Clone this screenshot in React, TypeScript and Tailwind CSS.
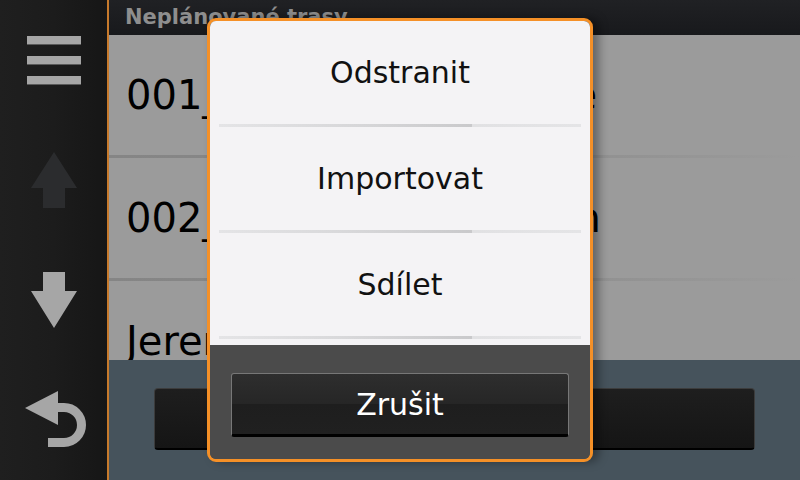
const font = { fontFamily: '"DejaVu Sans", "Noto Sans", sans-serif' };

function Hamburger() {
  return (
    <div className="flex flex-col gap-[11px]">
      {[0, 1, 2].map((i) => (
        <div key={i} className="w-[54px] h-[9px] bg-[#a6a6a6] border-b border-[#5a5a5a]" />
      ))}
    </div>
  );
}

function Arrow({ dir, color }: { dir: 'up' | 'down'; color: string }) {
  return (
    <svg width="46" height="56" viewBox="0 0 46 56">
      {dir === 'up' ? (
        <path d="M23 0 L46 36 H34 V56 H12 V36 H0 Z" fill={color} />
      ) : (
        <path d="M12 0 H34 V19 H46 L23 56 L0 19 H12 Z" fill={color} />
      )}
    </svg>
  );
}

function BackIcon() {
  return (
    <svg width="64" height="60" viewBox="0 0 64 60" className="ml-[5px]">
      <path d="M1 18 L34 1 V35 Z" fill="#a6a6a6" />
      <path d="M30 17.5 H40 A17.5 17.5 0 0 1 40 52.5 H24" fill="none" stroke="#a6a6a6" strokeWidth="9" />
    </svg>
  );
}

function Row({ text }: { text: string }) {
  return (
    <>
      <div className="h-[120px] shrink-0 flex items-center pl-[17px] text-[40px] text-black whitespace-nowrap overflow-hidden">
        {text}
      </div>
      <div className="h-[3px] shrink-0 bg-gradient-to-r from-[#858585] via-[#8a8a8a] to-[#9b9b9b]" />
    </>
  );
}

function MenuItem({ label }: { label: string }) {
  return (
    <>
      <div className="h-[103px] flex items-center justify-center text-[30px] text-[#111]">{label}</div>
      <div className="h-[3px] mx-[9px] bg-[linear-gradient(to_right,#e4e4e6_0%,#d8d8da_35%,#c9c9cb_70%,#e1e1e3_70%,#e4e4e6_100%)]" />
    </>
  );
}

export default function App() {
  return (
    <div className="relative w-[800px] h-[480px] flex overflow-hidden bg-[#9b9b9b]" style={font}>
      <div className="w-[109px] shrink-0 flex flex-col border-r-2 border-[#c77a2c] bg-gradient-to-r from-[#1f1f1f] via-[#1c1c1c] to-[#161616]">
        <div className="h-[120px] flex items-center justify-center">
          <Hamburger />
        </div>
        <div className="h-[120px] flex items-center justify-center">
          <Arrow dir="up" color="#2b2c2e" />
        </div>
        <div className="h-[120px] flex items-center justify-center">
          <Arrow dir="down" color="#a6a6a6" />
        </div>
        <div className="h-[120px] flex items-center justify-center">
          <BackIcon />
        </div>
      </div>

      <div className="flex-1 flex flex-col">
        <div className="h-[35px] shrink-0 bg-gradient-to-b from-[#202124] to-[#18191c] flex items-center pl-[16px] text-[21px] font-bold text-[#8e8e8e]">
          Neplánované trasy
        </div>
        <div className="flex-1 flex flex-col overflow-hidden bg-[#9b9b9b]">
          <Row text="001_Výlet_Kolem_Praze" />
          <Row text="002_Cyklotúra_Hodonín" />
          <Row text="Jeremy" />
        </div>
        <div className="h-[120px] shrink-0 bg-[#46535c] flex gap-[18px] px-[45px] pt-[28px]">
          <div className="flex-1 h-[62px] rounded-[4px] border border-[#3c3c3c] border-b-2 border-b-black bg-gradient-to-b from-[#1e1e1e] to-[#151515]" />
          <div className="flex-1 h-[62px] rounded-[4px] border border-[#3c3c3c] border-b-2 border-b-black bg-gradient-to-b from-[#1e1e1e] to-[#151515]" />
        </div>
      </div>

      <div className="absolute left-[207px] top-[18px] w-[386px] h-[444px] rounded-[9px] border-[3px] border-[#f59027] overflow-hidden flex flex-col shadow-[6px_0_10px_rgba(0,0,0,0.35)]">
        <div className="bg-[#f4f3f5] pb-[6px]">
          <MenuItem label="Odstranit" />
          <MenuItem label="Importovat" />
          <MenuItem label="Sdílet" />
        </div>
        <div className="flex-1 bg-[#4b4b4b] px-[21px] pt-[28px]">
          <div className="h-[64px] rounded-[3px] border border-[#777] border-b-[3px] border-b-black bg-[linear-gradient(to_bottom,#2e2e2e_0%,#262626_50%,#1e1e1e_50%,#202020_100%)] flex items-center justify-center text-[30px] text-white">
            Zrušit
          </div>
        </div>
      </div>
    </div>
  );
}
